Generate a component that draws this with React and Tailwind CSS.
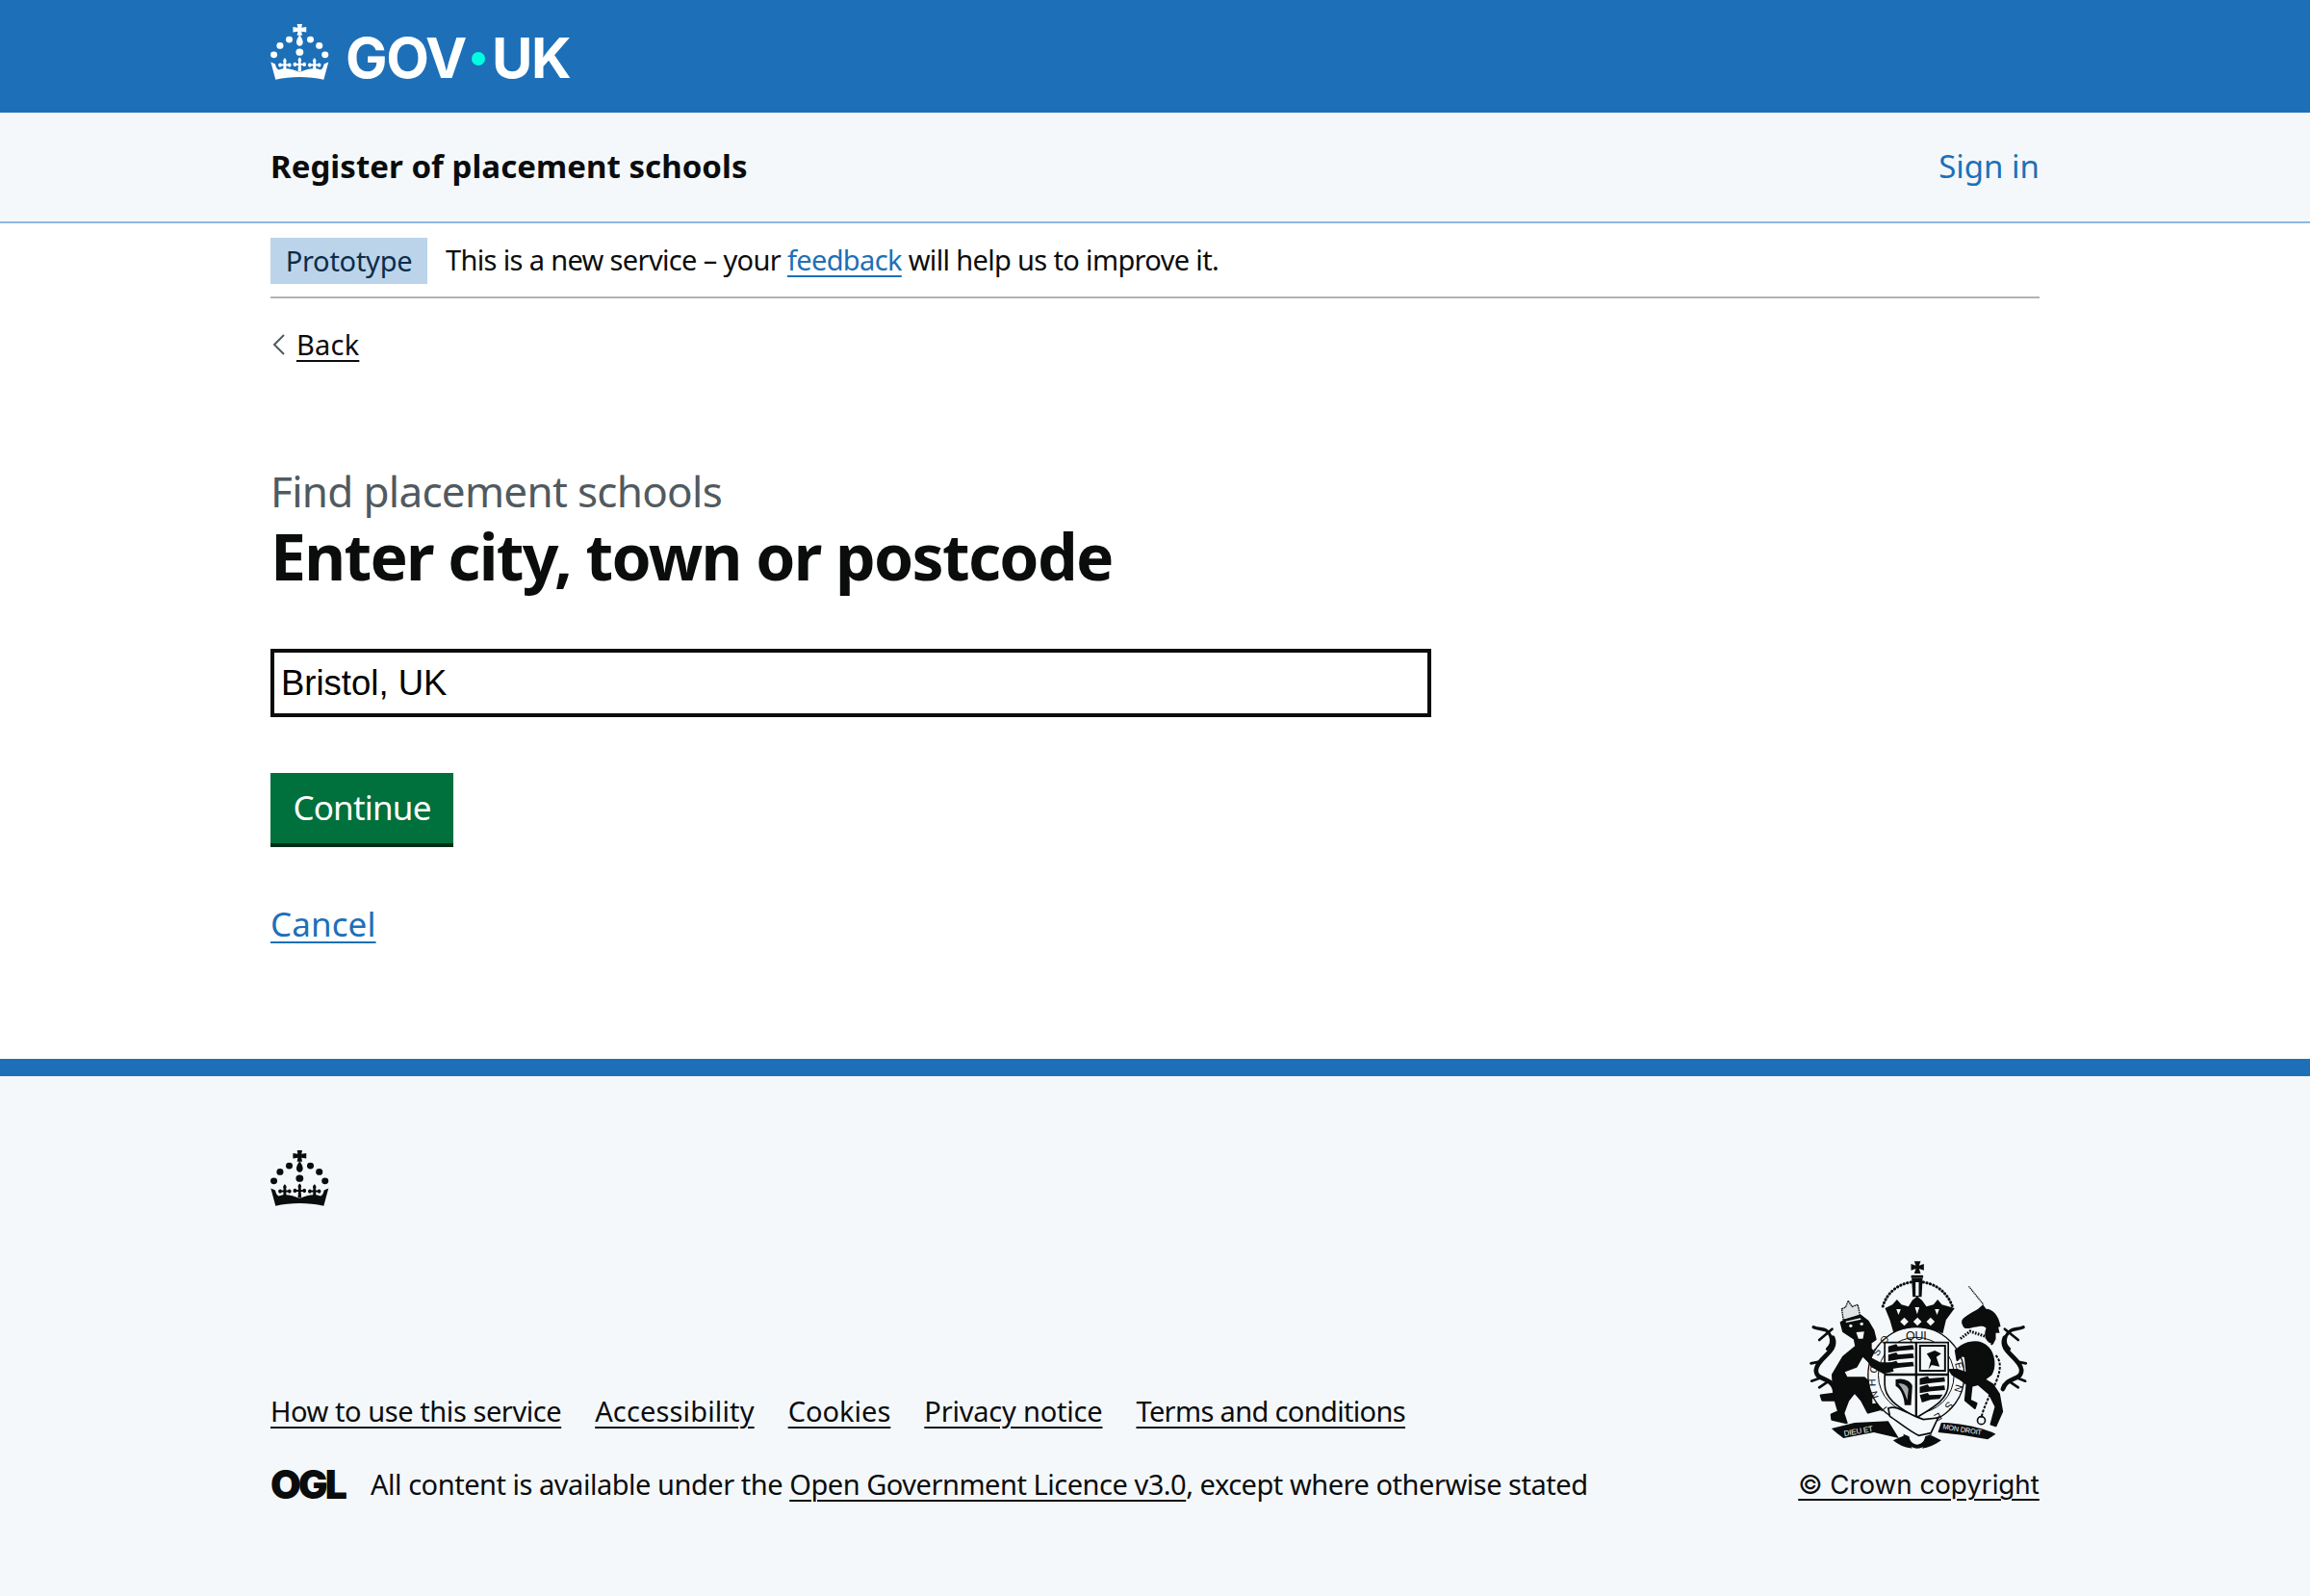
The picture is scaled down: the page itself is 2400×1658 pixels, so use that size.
const sans = "font-['Noto_Sans',sans-serif]";

function Crown({ className }) {
  const fleur = (x, y) => (
    <g key={x} transform={`translate(${x} ${y})`}>
      <path d="M-4 -17 C-7 -21 -3 -26 0 -29 C3 -26 7 -21 4 -17 L4 -10 L9 -10 C11 -15 19 -14 19 -7 C19 0 11 1 9 -4 L4 -4 L5 16 L-5 16 L-4 -4 L-9 -4 C-11 1 -19 0 -19 -7 C-19 -14 -11 -15 -9 -10 L-4 -10 Z" />
    </g>
  );
  return (
    <svg viewBox="58 72 172 176" preserveAspectRatio="none" className={className} fill="currentColor" aria-hidden="true">
      <path d="M136 75 H151 L149 86 L163 84 V100 L149 98 L151 110 H136 L138 98 L124 100 V84 L138 86 Z" />
      <path d="M143.500 108 C150 118 153 126 153 132 C153 139 148 143 143.500 143 C139 143 134 139 134 132 C134 126 137 118 143.500 108 Z" />
      <circle cx="113" cy="123" r="10" />
      <circle cx="175" cy="123" r="10" />
      <circle cx="86" cy="142" r="10" />
      <circle cx="201" cy="142" r="10" />
      <circle cx="68" cy="170" r="10" />
      <circle cx="218" cy="170" r="10" />
      <circle cx="143.500" cy="162" r="11" />
      {fleur(100, 209)}
      {fleur(143.5, 207)}
      {fleur(187, 209)}
      <path d="M59 193 L72 199 C74 208 76 214 82 217 C102 208 122 215 143.500 224 C165 215 185 208 205 217 C211 214 213 208 215 199 L228 193 L214 247 C170 236 117 236 73 247 Z" />
    </svg>
  );
}

function Crest({ className }) {
  return (
    <svg viewBox="100 50 680 600" className={className} aria-hidden="true">
      {/* imperial crown */}
      <g fill="#0b0c0c">
        <path d="M426 57 H446 L441 70 L456 65 V85 L441 80 L446 95 H426 L431 80 L416 85 V65 L431 70 Z" />
        <rect x="416" y="100" width="38" height="9" rx="3" />
        <path d="M418 110 H452 L449 168 H421 Z" />
      </g>
      <rect x="430" y="122" width="10" height="42" fill="#f4f8fb" />
      <path d="M416 122 C375 128 340 155 328 198" fill="none" stroke="#0b0c0c" strokeWidth="9" strokeDasharray="1 10" strokeLinecap="round" />
      <path d="M454 122 C495 128 530 155 545 198" fill="none" stroke="#0b0c0c" strokeWidth="9" strokeDasharray="1 10" strokeLinecap="round" />
      <path d="M335 203 L358 192 L372 176 L386 192 L408 198 L420 178 L435 166 L450 178 L464 198 L486 192 L499 176 L512 192 L552 203 L525 240 L515 282 C470 262 400 262 362 282 L350 240 Z" fill="#0b0c0c" />
      <g fill="#f4f8fb">
        <path d="M395 232 L408 245 L395 258 L382 245 Z" />
        <path d="M436 232 L449 245 L436 258 L423 245 Z" />
        <path d="M477 232 L490 245 L477 258 L464 245 Z" />
        <path d="M370 206 L384 206 L377 224 Z" />
        <path d="M428 200 L442 200 L435 222 Z" />
        <path d="M490 206 L504 206 L497 224 Z" />
      </g>
      {/* mantling */}
      <g fill="none" stroke="#0b0c0c" strokeLinecap="round">
        <path d="M172 295 C190 340 125 355 120 395 C118 430 165 415 178 455" strokeWidth="14" />
        <path d="M112 262 C135 272 155 262 165 290 C172 310 165 320 155 330" strokeWidth="10" />
        <path d="M130 302 L170 268" strokeWidth="8" />
        <path d="M104 375 L130 370 M106 430 L135 420 M130 450 L160 430" strokeWidth="8" />
        <path d="M708 295 C690 340 755 355 760 395 C762 430 715 415 702 455" strokeWidth="14" />
        <path d="M766 262 C745 272 725 262 712 290 C705 310 712 320 722 330" strokeWidth="10" />
        <path d="M750 302 L708 268" strokeWidth="8" />
        <path d="M774 375 L748 370 M772 430 L745 420 M750 450 L720 430" strokeWidth="8" />
      </g>
      {/* lion */}
      <path d="M200 205 L212 200 L220 180 L232 198 L250 192 L258 230 L205 240 Z" fill="#dfe3e6" stroke="#0b0c0c" strokeWidth="4" strokeDasharray="5 2" />
      <path d="M198 248 L212 240 L258 226 L282 245 L298 272 L305 300 L290 310 L290 330 L325 372 L355 372 L362 400 L330 408 L295 380 L265 350 L245 385 L205 400 L215 420 L270 420 L292 440 L292 505 L325 500 L330 515 L282 528 L262 490 L240 465 L220 490 L205 530 L215 560 L170 550 L168 535 L190 525 L180 490 L140 490 L135 475 L175 470 L172 410 L205 355 L245 322 L240 298 L205 275 Z" fill="#0b0c0c" stroke="#0b0c0c" strokeWidth="7" strokeLinejoin="round" />
      {/* garter */}
      <path d="M282 412 A150 150 0 0 1 582 412 A150 150 0 0 1 282 412 Z" fill="#f4f8fb" stroke="#0b0c0c" strokeWidth="4" />
      <circle cx="432" cy="412" r="118" fill="none" stroke="#0b0c0c" strokeWidth="3" />
      <g fill="#0b0c0c" fontFamily="'Liberation Sans',sans-serif" fontSize="32" textAnchor="middle">
        <text x="432" y="303" fontSize="37">QUI</text>
        <text transform="translate(318 345) rotate(-62)">S</text>
        <text transform="translate(340 310) rotate(-40)">O</text>
        <text transform="translate(305 435) rotate(-92)">H</text>
        <text transform="translate(311 395) rotate(-80)">O</text>
        <text transform="translate(312 470) rotate(-105)">N</text>
        <text transform="translate(340 510) rotate(-130)">I</text>
        <text transform="translate(555 385) rotate(75)">E</text>
        <text transform="translate(553 450) rotate(105)">N</text>
        <text transform="translate(526 500) rotate(130)">S</text>
        <text transform="translate(495 532) rotate(150)">E</text>
      </g>
      {/* shield */}
      <path d="M334 310 H532 V440 C532 490 480 515 432 545 C385 515 334 490 334 440 Z" fill="#f4f8fb" stroke="#0b0c0c" strokeWidth="5" />
      <path d="M432 310 V545 M334 410 H532" stroke="#0b0c0c" strokeWidth="7" />
      <g fill="#0b0c0c">
        <path d="M345 322 L370 315 L375 322 L422 318 L425 332 L380 336 L345 342 Z" />
        <path d="M345 348 L370 341 L375 348 L422 344 L425 358 L380 362 L345 368 Z" />
        <path d="M345 374 L370 367 L375 374 L422 370 L425 384 L380 388 L345 394 Z" />
        <path d="M443 422 L468 415 L473 422 L520 418 L522 432 L478 436 L443 442 Z" />
        <path d="M443 448 L468 441 L473 448 L520 444 L522 458 L478 462 L443 468 Z" />
        <path d="M443 474 L468 467 L473 474 L515 472 L505 486 L478 488 L450 497 Z" />
        <path d="M465 345 L490 335 L510 345 L495 355 L505 385 L480 380 L470 395 L478 365 Z" />
      </g>
      <rect x="444" y="320" width="78" height="78" fill="none" stroke="#0b0c0c" strokeWidth="6" />
      <path d="M368 425 C395 418 418 432 420 445 L416 505 L396 505 C395 480 385 455 368 445 Z" fill="#0b0c0c" />
      <path d="M376 438 C392 436 405 445 408 455 L404 490 C398 470 390 452 376 438 Z" fill="#a5a8aa" />
      {/* lion's paw over the shield */}
      <path d="M268 345 L320 372 L355 372 L362 400 L330 408 L290 385 Z" fill="#0b0c0c" />
      <g fill="#f4f8fb">
        <circle cx="228" cy="258" r="5" />
        <circle cx="262" cy="252" r="5" />
        <path d="M245 278 L270 276 L266 298 L252 298 Z" />
        <path d="M212 244 L258 234 L260 238 L214 248 Z" />
      </g>
      {/* unicorn */}
      <path d="M596 135 L642 192" stroke="#0b0c0c" strokeWidth="4" strokeDasharray="4 2" />
      <path d="M575 240 C585 225 610 215 625 205 L640 192 L650 205 C670 205 690 225 695 260 L688 262 L692 280 L680 280 L680 300 L672 315 C650 310 640 290 650 265 C640 255 625 262 612 262 C600 265 585 270 580 262 C575 255 572 248 575 240 Z" fill="#0b0c0c" />
      <path d="M570 298 L600 275 L650 292 L672 318" fill="none" stroke="#0b0c0c" strokeWidth="9" strokeDasharray="5 4" />
      <path d="M555 335 C585 305 630 300 655 325 C675 345 680 385 665 410 L645 425 L670 440 L690 470 L700 525 L680 570 L665 565 L680 510 L660 470 L625 440 L605 445 L600 490 L620 500 L615 515 L585 490 L590 440 L570 425 L545 410 L535 395 L560 395 L590 405 L585 355 L575 350 L560 365 Z" fill="#0b0c0c" stroke="#0b0c0c" strokeWidth="6" strokeLinejoin="round" />
      <path d="M680 350 C705 375 690 420 665 465 C650 500 640 520 635 545" fill="none" stroke="#0b0c0c" strokeWidth="6" strokeDasharray="9 4" />
      <circle cx="635" cy="553" r="12" fill="none" stroke="#0b0c0c" strokeWidth="5" />
      {/* motto */}
      <path d="M168 578 L240 560 L345 555 L378 608 L300 590 L205 608 C195 600 180 590 168 578 Z" fill="#0b0c0c" />
      <path d="M510 560 C560 560 640 575 680 595 L655 612 L575 598 L500 590 Z" fill="#0b0c0c" />
      <path d="M345 515 C375 503 405 535 455 550 L500 545 L478 592 L440 600 C410 585 380 560 350 540 Z" fill="#f4f8fb" stroke="#0b0c0c" strokeWidth="5" />
      <path d="M392 595 C395 625 420 640 435 640 C455 640 475 625 480 595 L460 603 C458 620 445 628 435 628 C425 628 412 620 410 603 Z" fill="#0b0c0c" />
      <path d="M360 615 C385 635 405 638 420 640 L395 600 Z M510 615 C490 630 470 638 450 640 L480 600 Z" fill="#0b0c0c" />
      <g fill="#f4f8fb" fontFamily="'Liberation Sans',sans-serif" fontSize="24">
        <text transform="translate(208 602) rotate(-10)">DIEU ET</text>
        <text transform="translate(514 579) rotate(9)" fontSize="22">MON DROIT</text>
      </g>
    </svg>
  );
}

function FooterLink({ children, className = "" }) {
  return (
    <a href="#" className={`text-[#0b0c0c] underline decoration-2 underline-offset-[5px] ${className}`}>
      {children}
    </a>
  );
}

export default function App() {
  return (
    <div className={`flex min-h-[1658px] flex-col bg-white text-[#0b0c0c] ${sans}`}>
      <header className="h-[117px] bg-[#1d70b8] text-white">
        <div className="mx-auto flex h-full w-[1838px] items-start pt-[24px]">
          <Crown className="h-[59px] w-[61px]" />
          <div className="ml-[17px] mt-[-2px] flex items-center font-['Inter',sans-serif] text-[58px] leading-[76px] font-bold tracking-[-1.4px]">
            <span>GOV</span>
            <span className="ml-[6px] mr-[7px] mt-[2px] h-[14px] w-[14px] rounded-full bg-[#00ffe0]" />
            <span>UK</span>
          </div>
        </div>
      </header>

      <div className="h-[115px] border-b-2 border-[#8fb8e0] bg-[#f4f8fb]">
        <div className="mx-auto flex h-full w-[1838px] items-center justify-between pb-[1px]">
          <span className="text-[33px] font-bold tracking-[0.05px]">Register of placement schools</span>
          <a href="#" className="text-[33px] text-[#1d70b8]">Sign in</a>
        </div>
      </div>

      <div className="mx-auto w-[1838px]">
        <div className="flex h-[78px] items-center border-b-2 border-[#b1b4b6] pt-[2px] text-[29px] tracking-[-0.65px]">
          <span className="flex h-[48px] w-[163px] items-center justify-center bg-[#bbd4ea] pb-[1px] tracking-[-0.25px] text-[#0c2d4a]">Prototype</span>
          <p className="ml-[19px] mt-[-3px]">
            This is a new service – your{" "}
            <a href="#" className="text-[#1d70b8] underline decoration-2 underline-offset-[5px]">feedback</a>{" "}
            will help us to improve it.
          </p>
        </div>

        <div className="mt-[28px] flex h-[40px] items-center text-[29px] tracking-[0.2px]">
          <svg viewBox="0 0 14 22" className="ml-[2px] mr-[11px] h-[22px] w-[14px]" fill="none" stroke="#505a5f" strokeWidth="2" aria-hidden="true">
            <path d="M12 1 L2 11 L12 21" />
          </svg>
          <FooterLink>Back</FooterLink>
        </div>

        <p className="mt-[104px] text-[44px] leading-[56px] tracking-[-0.7px] text-[#505a5f]">Find placement schools</p>
        <h1 className="mt-[1px] text-[66px] leading-[76px] font-bold tracking-[-1.7px]">Enter city, town or postcode</h1>

        <input
          readOnly
          value="Bristol, UK"
          className="mt-[59px] block h-[71px] w-[1206px] border-4 border-[#0b0c0c] bg-white px-[7px] font-['Liberation_Sans',sans-serif] text-[36.500px] text-black outline-none"
        />

        <button className="mt-[58px] block h-[77px] w-[190px] border-b-[4px] border-[#002d18] bg-[#00703c] text-[35px] tracking-[-0.8px] text-white">
          Continue
        </button>

        <div className="mt-[55px] h-[49px] text-[35px] leading-[49px] tracking-[0.1px]">
          <a href="#" className="text-[#1d70b8] underline decoration-2 underline-offset-[5px]">Cancel</a>
        </div>
      </div>

      <footer className="mt-[116px] flex-1 border-t-[18px] border-[#1d70b8] bg-[#f4f8fb]">
        <div className="mx-auto w-[1838px] pt-[76px]">
          <Crown className="h-[59px] w-[61px]" />
          <div className="mt-[55px] flex items-end justify-between text-[29px] tracking-[-0.43px]">
            <div className="pb-[2px]">
              <div className="flex gap-x-[35px]">
                <FooterLink>How to use this service</FooterLink>
                <FooterLink className="tracking-[0.15px]">Accessibility</FooterLink>
                <FooterLink className="tracking-normal">Cookies</FooterLink>
                <FooterLink className="tracking-[-0.2px]">Privacy notice</FooterLink>
                <FooterLink className="tracking-[-0.65px]">Terms and conditions</FooterLink>
              </div>
              <div className="mt-[33px] flex items-center">
                <span className="w-[104px] font-['Inter',sans-serif] text-[41px] leading-[42px] font-black tracking-[-3px]">OGL</span>
                <p className="tracking-[-0.47px]">
                  All content is available under the{" "}
                  <FooterLink>Open Government Licence v3.0</FooterLink>, except where otherwise stated
                </p>
              </div>
            </div>
            <div className="flex w-[251px] flex-col items-center pb-[2px]">
              <Crest className="h-[200px] w-[227px]" />
              <a href="#" className="mt-[14px] whitespace-nowrap font-['Inter',sans-serif] text-[27.700px] tracking-normal text-[#0b0c0c] underline decoration-2 underline-offset-[5px]">© Crown copyright</a>
            </div>
          </div>
        </div>
      </footer>
    </div>
  );
}
